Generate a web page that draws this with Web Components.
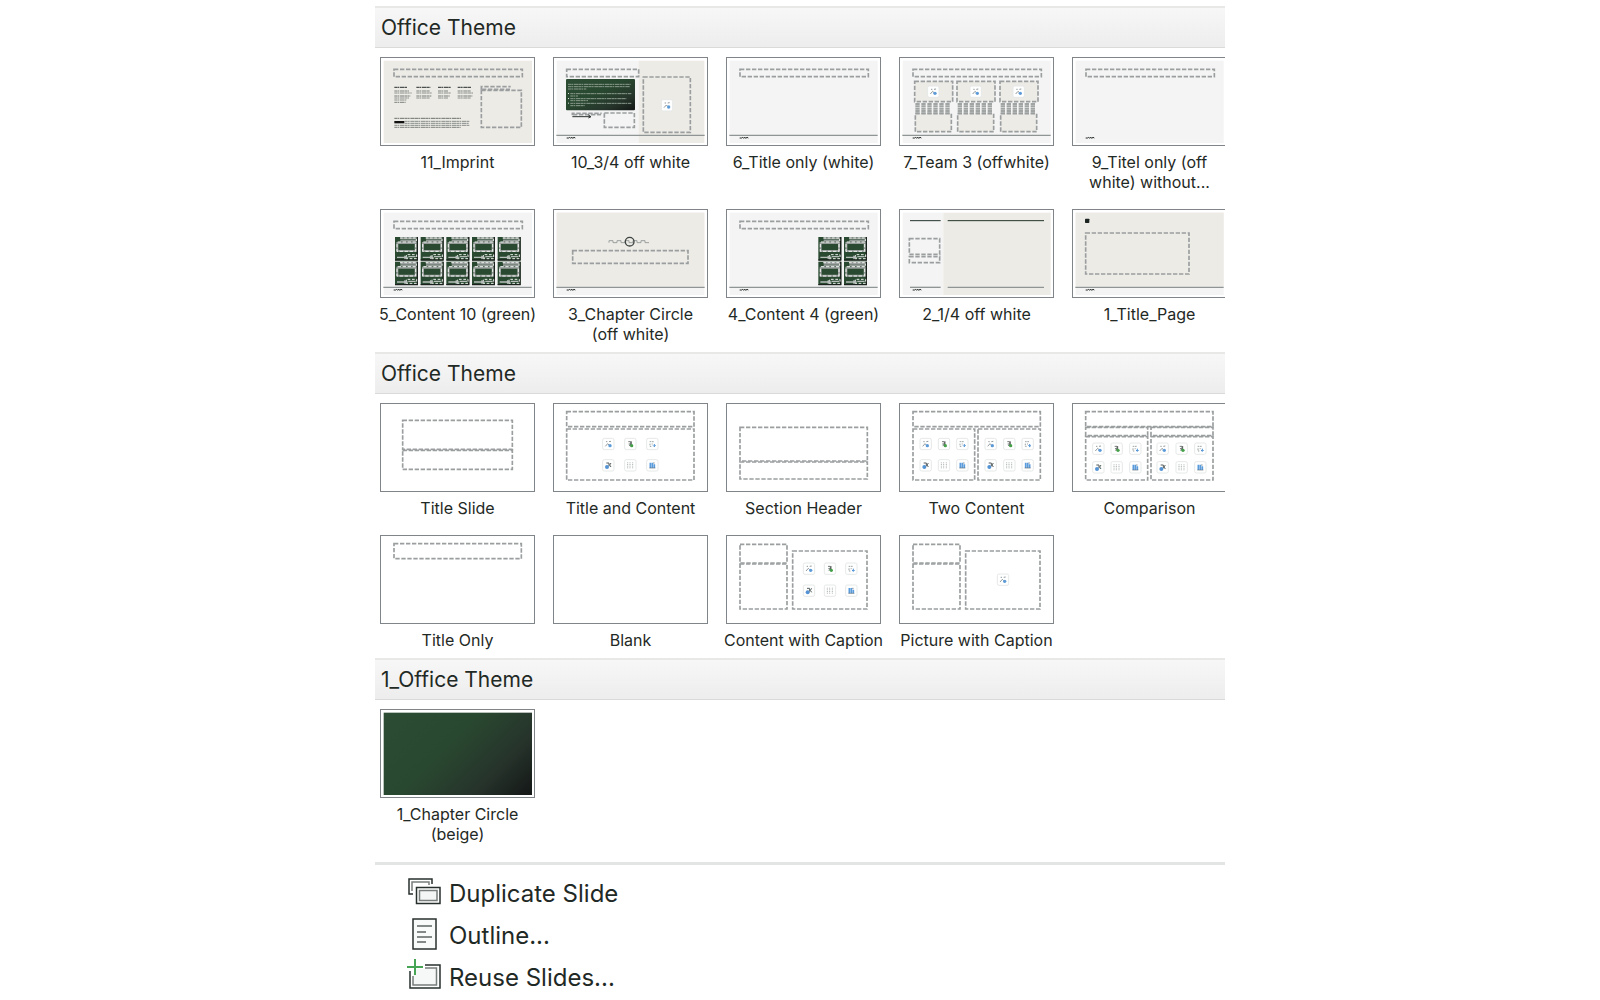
<!DOCTYPE html>
<html lang="en">
<head>
<meta charset="utf-8">
<title>New Slide</title>
<style>
	body {
		margin: 0;
		background: #fff;
		color: #1f2925;
		font-family: Inter, "Liberation Sans", sans-serif;
	}
</style>
</head>
<body>
<layout-gallery>
	<theme-section heading="Office Theme">
		<slide-layout kind="imprint">11_Imprint</slide-layout>
		<slide-layout kind="threeQuarter">10_3/4 off white</slide-layout>
		<slide-layout kind="titleWhite">6_Title only (white)</slide-layout>
		<slide-layout kind="team">7_Team 3 (offwhite)</slide-layout>
		<slide-layout kind="titleBare">9_Titel only (off white) without...</slide-layout>
		<slide-layout kind="contentTen">5_Content 10 (green)</slide-layout>
		<slide-layout kind="chapterCircle">3_Chapter Circle (off&nbsp;white)</slide-layout>
		<slide-layout kind="contentFour">4_Content 4 (green)</slide-layout>
		<slide-layout kind="quarter">2_1/4 off white</slide-layout>
		<slide-layout kind="titlePage">1_Title_Page</slide-layout>
	</theme-section>
	<theme-section heading="Office Theme">
		<slide-layout kind="titleSlide">Title Slide</slide-layout>
		<slide-layout kind="titleContent">Title and Content</slide-layout>
		<slide-layout kind="sectionHeader">Section Header</slide-layout>
		<slide-layout kind="twoContent">Two Content</slide-layout>
		<slide-layout kind="comparison">Comparison</slide-layout>
		<slide-layout kind="titleOnly">Title Only</slide-layout>
		<slide-layout kind="blank">Blank</slide-layout>
		<slide-layout kind="contentCaption">Content with Caption</slide-layout>
		<slide-layout kind="pictureCaption">Picture with Caption</slide-layout>
	</theme-section>
	<theme-section heading="1_Office Theme">
		<slide-layout kind="greenFill">1_Chapter Circle (beige)</slide-layout>
	</theme-section>
	<menu-command slot="commands" icon="duplicate">Duplicate Slide</menu-command>
	<menu-command slot="commands" icon="outline">Outline...</menu-command>
	<menu-command slot="commands" icon="reuse">Reuse Slides...</menu-command>
</layout-gallery>

<script>
(function() {
	const OFF = "#ecebe6";
	const PALE = "#f4f4f4";

	// Thumbnails are drawn on a 465 x 267 grid, three units to the pixel.
	function fill(x, y, w, h, color) {
		return `<rect x="${x}" y="${y}" width="${w}" height="${h}" fill="${color}"/>`;
	}
	function dash(x, y, w, h) {
		return `<rect class="dash" x="${x}" y="${y}" width="${w}" height="${h}"/>`;
	}
	function line(x1, x2, y, color, width) {
		return `<path d="M${x1} ${y}H${x2}" stroke="${color}" stroke-width="${width}" fill="none"/>`;
	}
	function scribble(x1, x2, y, color, width) {
		return `<path d="M${x1} ${y}H${x2}" stroke="${color}" stroke-width="${width || 3}" stroke-dasharray="9 1 5 2 13 1" fill="none"/>`;
	}
	function logo() {
		return `<path d="M41 243h6l3-2 3 3 3-4 3 4 4-3 4 2" fill="none" stroke="#222927" stroke-width="3"/>`;
	}
	function footer() {
		return line(10, 455, 235, "#8f9594", 4) + logo();
	}
	const title = dash(42, 37, 385, 22);

	const glyphs = {
		picture: `<path d="M-9 7l7-8 4 4M-7-7h4M2-7l6-1" stroke="#7b8488" stroke-width="2.5" fill="none"/><circle cx="5" cy="5" r="5" fill="#5c9bd8"/>`,
		stock: `<path d="M-6-7h7v12M-5 0h6M-4 5l5-3" stroke="#6f7876" stroke-width="3" fill="none"/><path d="M3-8v12" stroke="#222" stroke-width="2"/><circle cx="4" cy="5" r="5" fill="#45a04a"/>`,
		smart: `<path d="M-8-7h12M-7-1v8h6M-2 0h3" stroke="#8a9192" stroke-width="2.5" stroke-dasharray="5 2" fill="none"/><path d="M6 0v8M2 4l4 4 4-4" stroke="#4e91d4" stroke-width="3" fill="none"/>`,
		video: `<path d="M-6-7h8v10M8-7l-4 6 4 6" stroke="#545d5f" stroke-width="3" fill="none"/><circle cx="-4" cy="5" r="6" fill="#5594d4"/>`,
		table: `<path d="M-8-9V9M-1-9V9M7-9V9" stroke="#aeb3b4" stroke-width="3" stroke-dasharray="3 2"/>`,
		chart: `<path d="M-6-8V8M0-8V8M6-3V8" stroke="#5a9bdc" stroke-width="5"/><path d="M-9 8H9M2-7h5" stroke="#60707a" stroke-width="2"/>`
	};
	function icon(kind, x, y) {
		return `<g transform="translate(${x} ${y})"><rect x="-17" y="-17" width="34" height="34" rx="5" fill="#fff" stroke="#e6e8e8" stroke-width="3"/>${glyphs[kind]}</g>`;
	}
	function iconGrid(xs, ys) {
		const order = ["picture", "stock", "smart", "video", "table", "chart"];
		return order.map((kind, i) => icon(kind, xs[i % 3], ys[Math.floor(i / 3)])).join("");
	}
	function greenCard(x, y) {
		return `<g transform="translate(${x} ${y})">
			<rect width="69" height="70" fill="#294a30"/>
			<path d="M67 0V70M0 69H69" stroke="#1b221d" stroke-width="4"/>
			<path d="M16 4H65M16 11H65M7 18H62V42H7Z" fill="none" stroke="#969c99" stroke-width="6"/>
			<path d="M8 15H62V43H6V18" fill="none" stroke="#f0f2f1" stroke-width="3" stroke-dasharray="10 5"/>
			<path d="M15 3H64V12M34 62V53H65V65H32" fill="none" stroke="#e9ecea" stroke-width="3" stroke-dasharray="8 5"/>
			<path d="M6 61H36M28 57l8 4-8 4M40 59H62" fill="none" stroke="#b7bdba" stroke-width="4"/>
		</g>`;
	}
	function greenCards(xs) {
		return xs.map(x => greenCard(x, 84) + greenCard(x, 158)).join("");
	}
	function gradient() {
		return `<defs><linearGradient id="green" x1="0" y1="0" x2="1" y2="1">
			<stop offset="0" stop-color="#2d4e34"/><stop offset=".45" stop-color="#294830"/>
			<stop offset=".75" stop-color="#26352b"/><stop offset="1" stop-color="#141716"/>
		</linearGradient><linearGradient id="slide" gradientUnits="userSpaceOnUse" x1="11" y1="11" x2="357" y2="357">
			<stop offset="0" stop-color="#2c4c33"/><stop offset=".42" stop-color="#294830"/>
			<stop offset=".74" stop-color="#26332b"/><stop offset="1" stop-color="#141716"/>
		</linearGradient></defs>`;
	}
	function imprintText() {
		let out = "";
		[[43, 38, 52], [109, 42, 48], [174, 38, 38], [233, 40, 47]].forEach(([x, head, w]) => {
			out += scribble(x, x + head, 91, "#4c514f", 4);
			out += scribble(x, x + w - 8, 102, "#7d817e") + scribble(x, x + w, 108, "#8b8f8c");
			out += scribble(x, x + w - 3, 117, "#777b78") + scribble(x, x + w - 8, 123, "#8b8f8c");
		});
		out += scribble(43, 79, 129, "#8b8f8c") + scribble(43, 77, 136, "#7d817e");
		out += scribble(43, 243, 184, "#6d716e");
		out += scribble(74, 268, 193, "#8a8e8b") + fill(43, 192, 30, 7, "#111");
		out += scribble(74, 266, 199, "#8a8e8b") + scribble(43, 268, 205, "#8a8e8b") + scribble(43, 242, 211, "#7d817e");
		return out;
	}
	function greenText() {
		const rows = [[45, 233, 82], [45, 230, 89], [45, 100, 96], [52, 235, 110], [52, 75, 117], [52, 220, 125], [52, 105, 131], [52, 235, 139], [52, 95, 146]];
		const bullets = [110, 125, 139].map(y => fill(45, y - 2, 3, 3, "#dce1dd")).join("");
		return rows.map(r => scribble(r[0], r[1], r[2], "#8b9c8e")).join("") + bullets;
	}
	function teamCard(x) {
		let mesh = "";
		for (let y = 141; y < 170; y += 7) {
			mesh += `<path d="M${x + 2} ${y}h108" stroke="#a0a4a3" stroke-width="6" stroke-dasharray="13 5"/>`;
		}
		return fill(x, 73, 114, 61, OFF) + dash(x, 73, 114, 61) + icon("picture", x + 56, 104) +
			mesh + fill(x + 2, 170, 108, 54, OFF) + dash(x + 2, 170, 108, 54);
	}

	const thumbs = {
		imprint: () => fill(11, 11, 445, 247, OFF) + title + imprintText() +
			`<path class="dash" d="M304 98v-9h88M306 97h84"/>` + dash(304, 100, 120, 111),
		threeQuarter: () => gradient() + fill(11, 11, 246, 247, PALE) + fill(257, 11, 197, 247, OFF) +
			dash(41, 37, 216, 22) + `<rect x="39" y="66" width="207" height="94" rx="3" fill="url(#green)"/>` + greenText() +
			`<path class="dash" d="M58 175v-6h88M60 173h84"/><path d="M58 179h55M106 174l8 5-8 4" fill="none" stroke="#2b3330" stroke-width="3"/>` +
			dash(154, 168, 90, 43) + dash(271, 60, 141, 166) + icon("picture", 342, 145) + footer(),
		titleWhite: () => fill(11, 11, 444, 247, PALE) + title + footer(),
		team: () => fill(11, 11, 444, 247, PALE) + title + [47, 174, 303].map(teamCard).join("") + footer(),
		titleBare: () => fill(11, 11, 444, 247, PALE) + title + logo(),
		contentTen: () => fill(11, 11, 445, 247, PALE) + title + greenCards([45, 122, 199, 276, 353]) + footer(),
		chapterCircle: () => fill(11, 11, 443, 247, PALE) + fill(11, 11, 443, 222, OFF) +
			`<path d="M168 101v-6h12v6h12v-6h12v6h12v-6h12v6h12v-6h12v6h12v-6h12v6h12" fill="none" stroke="#9b9f9f" stroke-width="3"/>` +
			`<circle cx="230" cy="98" r="13" fill="none" stroke="#3c4341" stroke-width="4"/>` + dash(59, 125, 346, 38) + footer(),
		contentFour: () => fill(11, 11, 444, 247, PALE) + title + greenCards([277, 354]) + footer(),
		quarter: () => fill(11, 11, 122, 247, PALE) + fill(133, 11, 322, 247, OFF) +
			line(33, 125, 35, "#24342b", 3) + line(146, 435, 35, "#24342b", 3) + dash(31, 89, 91, 47) + dash(31, 143, 91, 18) +
			line(33, 125, 235, "#8f9594", 4) + line(146, 435, 235, "#8f9594", 4) + logo(),
		titlePage: () => fill(11, 11, 444, 247, PALE) + fill(11, 11, 444, 222, OFF) +
			`<rect x="39" y="29" width="13" height="13" rx="2" fill="#1c2421"/>` + dash(41, 72, 310, 123) + footer(),
		titleSlide: () => dash(68, 52, 329, 87) + dash(68, 142, 329, 57),
		titleContent: () => dash(41, 26, 382, 45) + dash(41, 78, 382, 153) + iconGrid([166, 232, 298], [123, 187]),
		sectionHeader: () => dash(42, 73, 382, 101) + dash(42, 177, 382, 51),
		twoContent: () => dash(42, 26, 382, 45) + dash(42, 78, 185, 153) + dash(237, 78, 187, 153) +
			iconGrid([80, 135, 190], [123, 187]) + iconGrid([275, 331, 386], [123, 187]),
		comparison: () => dash(41, 26, 382, 45) + dash(41, 73, 186, 25) + dash(237, 73, 186, 25) +
			dash(41, 101, 186, 130) + dash(237, 101, 186, 130) +
			iconGrid([79, 134, 190], [137, 193]) + iconGrid([272, 329, 385], [137, 193]),
		titleOnly: () => dash(42, 26, 382, 45),
		blank: () => "",
		contentCaption: () => dash(42, 28, 141, 56) + dash(42, 87, 141, 135) + dash(200, 48, 223, 174) +
			iconGrid([249, 312, 376], [101, 167]),
		pictureCaption: () => dash(42, 28, 141, 56) + dash(42, 87, 141, 135) + dash(200, 48, 223, 174) + icon("picture", 312, 134),
		greenFill: () => gradient() + fill(11, 11, 445, 247, "url(#slide)")
	};

	const commandIcons = {
		duplicate: `<g fill="none" stroke="#27302c">
			<path d="M6 19H2V4H25V9" stroke-width="1.5"/><path d="M5 16V7H22V10" stroke="#777e7b" stroke-width="1.5"/>
			<rect x="9.5" y="12.5" width="23.5" height="16" stroke-width="1.5"/>
			<rect x="12.5" y="15.5" width="17.5" height="10" fill="#f4f5f5" stroke="#777e7b" stroke-width="1.5"/>
		</g>`,
		outline: `<rect x="6" y="2" width="23" height="30" fill="#f9fafa" stroke="#27302c" stroke-width="1.5"/>
			<path d="M10 9H25M10 15H19M10 20H25M10 25H19" stroke="#5d6562" stroke-width="1.5"/>`,
		reuse: `<path d="M9 10H29V26H6V16Z" fill="#f6f7f7"/><g fill="none" stroke="#27302c">
			<path d="M18 6H33V29H3V12" stroke-width="1.5"/><path d="M18 9H29.5V26H6V17" stroke="#777e7b" stroke-width="1.5"/>
			<path d="M0 8H16M8 0V16" stroke="#46a455" stroke-width="2"/>
		</g>`
	};

	class LayoutGallery extends HTMLElement {
		constructor() {
			super();
			this.attachShadow({mode: "open"}).innerHTML = `
				<style>
					:host { display: block; max-width: 850px; margin: 0 auto; padding-top: 6px; }
					hr { height: 3px; margin: 10px 0 0; border: 0; background: #e2e5e4; }
					.commands { display: flex; flex-direction: column; padding: 7px 32px 0; }
				</style>
				<slot></slot>
				<hr>
				<div class="commands"><slot name="commands"></slot></div>`;
		}
	}

	class ThemeSection extends HTMLElement {
		constructor() {
			super();
			this.attachShadow({mode: "open"}).innerHTML = `
				<style>
					:host { display: block; overflow: hidden; }
					h2 {
						box-sizing: border-box;
						height: 42px;
						margin: 0;
						padding: 0 6px;
						border-top: 2px solid #e8e9e6;
						border-bottom: 1px solid #dadbd9;
						background: linear-gradient(#f7f7f7, #ededed);
						font-size: 21px;
						font-weight: 400;
						line-height: 40px;
					}
					.grid {
						display: grid;
						grid-template-columns: repeat(5, 165px);
						gap: 17px 8px;
						padding: 9px 0 8px;
					}
				</style>
				<h2></h2>
				<div class="grid"><slot></slot></div>`;
			this.shadowRoot.querySelector("h2").textContent = this.getAttribute("heading");
		}
	}

	class SlideLayout extends HTMLElement {
		constructor() {
			super();
			this.attachShadow({mode: "open"}).innerHTML = `
				<style>
					:host { display: block; }
					button {
						display: flex;
						flex-direction: column;
						align-items: center;
						gap: 6px;
						width: 100%;
						padding: 0;
						border: 0;
						background: none;
						color: inherit;
						font: inherit;
						font-size: 16px;
						line-height: 20px;
					}
					svg { display: block; width: 155px; height: 89px; }
					.frame { fill: #fff; stroke: #7f8588; stroke-width: 3; }
					.dash { fill: none; stroke: #9a9e9f; stroke-width: 5; stroke-dasharray: 13 5; }
				</style>
				<button type="button">
					<svg viewBox="0 0 465 267" aria-hidden="true">
						<rect class="frame" x="1.5" y="1.5" width="462" height="264"/>
						${thumbs[this.getAttribute("kind")]()}
					</svg>
					<span><slot></slot></span>
				</button>`;
		}
	}

	class MenuCommand extends HTMLElement {
		constructor() {
			super();
			this.attachShadow({mode: "open"}).innerHTML = `
				<style>
					:host { display: block; }
					button {
						display: flex;
						align-items: center;
						gap: 8px;
						width: 100%;
						height: 42px;
						padding: 0;
						border: 0;
						background: none;
						color: inherit;
						font: inherit;
						font-size: 24px;
						text-align: left;
					}
					svg { flex: none; width: 34px; height: 36px; }
				</style>
				<button type="button">
					<svg viewBox="0 0 34 36" aria-hidden="true">${commandIcons[this.getAttribute("icon")]}</svg>
					<span><slot></slot></span>
				</button>`;
		}
	}

	customElements.define("layout-gallery", LayoutGallery);
	customElements.define("theme-section", ThemeSection);
	customElements.define("slide-layout", SlideLayout);
	customElements.define("menu-command", MenuCommand);
})();
</script>
</body>
</html>
